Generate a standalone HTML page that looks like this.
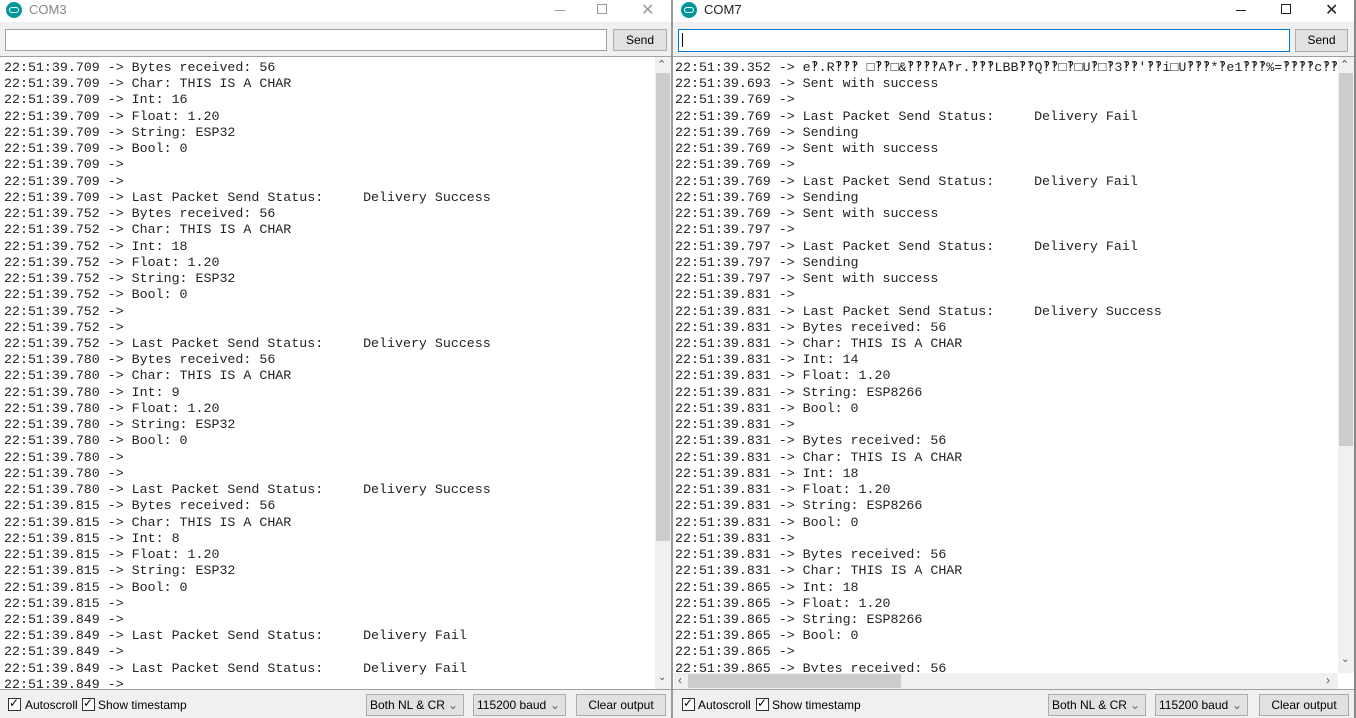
<!DOCTYPE html>
<html><head><meta charset="utf-8"><style>
*{margin:0;padding:0;box-sizing:border-box}
body{width:1356px;height:718px;overflow:hidden;background:#fff;position:relative;font-family:"Liberation Sans",sans-serif}
.a{position:absolute}
.txt{font-family:"Liberation Mono","DejaVu Sans Mono",monospace;font-size:13.3px;line-height:16.24px;white-space:pre;color:#222;overflow:hidden}
.title{font-size:13px;color:#222}
.btn{background:#e1e1e1;border:1px solid #adadad;font-size:12px;text-align:center;color:#000}
.inp{border:1px solid #a0a0a0;background:#fff}
.sb{background:#f0f0f0}
.thumb{background:#cdcdcd}
.sel{border:1px solid #adadad;background:#e1e1e1;font-size:12px;padding-left:3px;line-height:20px}
.cb{width:13px;height:13px;border:1px solid #333;background:#fff}
.lbl{font-size:12px;color:#000}
.logo{width:16px;height:16px;border-radius:50%;background:#00979c}
</style></head><body>
<!-- LEFT WINDOW -->
<div class="a" style="left:0;top:0;width:672px;height:718px;background:#f0f0f0"></div>
<div class="a" style="left:0;top:0;width:672px;height:22px;background:#fff"></div>
<div class="a logo" style="left:6px;top:2px"></div>
<div class="a" style="left:9px;top:7px;width:10px;height:6px;border:1.5px solid #fff;border-radius:3px"></div>
<div class="a title" style="left:29px;top:2px;color:#888">COM3</div>
<div class="a" style="left:555px;top:10px;width:10px;border-top:1px solid #999"></div>
<div class="a" style="left:597px;top:4px;width:10px;height:10px;border:1px solid #999"></div>
<div class="a" style="left:641px;top:0px;font-size:16px;color:#999">✕</div>
<div class="a inp" style="left:5px;top:29px;width:602px;height:22px"></div>
<div class="a btn" style="left:613px;top:29px;width:54px;height:22px;line-height:20px">Send</div>
<div class="a" style="left:0;top:56px;width:672px;height:634px;background:#fff;border-top:1px solid #a0a0a0"></div>
<div class="a txt" style="left:4px;top:60px;width:650px;height:630px">22:51:39.709 -> Bytes received: 56
22:51:39.709 -> Char: THIS IS A CHAR
22:51:39.709 -> Int: 16
22:51:39.709 -> Float: 1.20
22:51:39.709 -> String: ESP32
22:51:39.709 -> Bool: 0
22:51:39.709 -> 
22:51:39.709 -> 
22:51:39.709 -> Last Packet Send Status:     Delivery Success
22:51:39.752 -> Bytes received: 56
22:51:39.752 -> Char: THIS IS A CHAR
22:51:39.752 -> Int: 18
22:51:39.752 -> Float: 1.20
22:51:39.752 -> String: ESP32
22:51:39.752 -> Bool: 0
22:51:39.752 -> 
22:51:39.752 -> 
22:51:39.752 -> Last Packet Send Status:     Delivery Success
22:51:39.780 -> Bytes received: 56
22:51:39.780 -> Char: THIS IS A CHAR
22:51:39.780 -> Int: 9
22:51:39.780 -> Float: 1.20
22:51:39.780 -> String: ESP32
22:51:39.780 -> Bool: 0
22:51:39.780 -> 
22:51:39.780 -> 
22:51:39.780 -> Last Packet Send Status:     Delivery Success
22:51:39.815 -> Bytes received: 56
22:51:39.815 -> Char: THIS IS A CHAR
22:51:39.815 -> Int: 8
22:51:39.815 -> Float: 1.20
22:51:39.815 -> String: ESP32
22:51:39.815 -> Bool: 0
22:51:39.815 -> 
22:51:39.849 -> 
22:51:39.849 -> Last Packet Send Status:     Delivery Fail
22:51:39.849 -> 
22:51:39.849 -> Last Packet Send Status:     Delivery Fail
22:51:39.849 -> </div>
<div class="a sb" style="left:655px;top:57px;width:16px;height:633px"></div>
<div class="a thumb" style="left:656px;top:73px;width:14px;height:468px"></div>
<div class="a" style="left:657px;top:58px;font-size:11px;color:#555">&#8963;</div>
<div class="a" style="left:658px;top:672px;font-size:10px;color:#555">&#8964;</div>
<div class="a" style="left:0;top:689px;width:672px;border-top:1px solid #a0a0a0"></div>
<div class="a cb" style="left:8px;top:698px"></div><div class="a" style="left:9px;top:696px;font-size:12px">✓</div>
<div class="a lbl" style="left:25px;top:698px">Autoscroll</div>
<div class="a cb" style="left:82px;top:698px"></div><div class="a" style="left:83px;top:696px;font-size:12px">✓</div>
<div class="a lbl" style="left:98px;top:698px">Show timestamp</div>
<div class="a sel" style="left:366px;top:694px;width:98px;height:22px">Both NL &amp; CR <span style="position:absolute;right:5px;color:#666">⌄</span></div>
<div class="a sel" style="left:473px;top:694px;width:93px;height:22px">115200 baud <span style="position:absolute;right:5px;color:#666">⌄</span></div>
<div class="a btn" style="left:576px;top:694px;width:90px;height:22px;line-height:20px">Clear output</div>
<div class="a" style="left:671px;top:0;width:2px;height:718px;background:#9a9a9a"></div>

<!-- RIGHT WINDOW -->
<div class="a" style="left:673px;top:0;width:683px;height:718px;background:#f0f0f0"></div>
<div class="a" style="left:673px;top:0;width:683px;height:22px;background:#fff"></div>
<div class="a logo" style="left:681px;top:2px"></div>
<div class="a" style="left:684px;top:7px;width:10px;height:6px;border:1.5px solid #fff;border-radius:3px"></div>
<div class="a title" style="left:704px;top:2px">COM7</div>
<div class="a" style="left:1236px;top:10px;width:10px;border-top:1px solid #222"></div>
<div class="a" style="left:1281px;top:4px;width:10px;height:10px;border:1px solid #222"></div>
<div class="a" style="left:1325px;top:0px;font-size:16px;color:#222">✕</div>
<div class="a inp" style="left:678px;top:29px;width:612px;height:23px;border-color:#0078d7"></div>
<div class="a" style="left:682px;top:33px;width:1px;height:14px;background:#000"></div>
<div class="a btn" style="left:1295px;top:29px;width:53px;height:23px;line-height:21px">Send</div>
<div class="a" style="left:673px;top:56px;width:681px;height:634px;background:#fff;border-top:1px solid #a0a0a0"></div>
<div class="a txt" style="left:675px;top:60px;width:662px;height:612px">22:51:39.352 -> e‽.R‽‽‽ □‽‽□&amp;‽‽‽‽A‽r.‽‽‽LBB‽‽Q‽‽□‽□U‽□‽3‽‽'‽‽i□U‽‽‽*‽e1‽‽‽%=‽‽‽‽c‽‽N□i‽‽‽*‽]‽'
22:51:39.693 -> Sent with success
22:51:39.769 -> 
22:51:39.769 -> Last Packet Send Status:     Delivery Fail
22:51:39.769 -> Sending
22:51:39.769 -> Sent with success
22:51:39.769 -> 
22:51:39.769 -> Last Packet Send Status:     Delivery Fail
22:51:39.769 -> Sending
22:51:39.769 -> Sent with success
22:51:39.797 -> 
22:51:39.797 -> Last Packet Send Status:     Delivery Fail
22:51:39.797 -> Sending
22:51:39.797 -> Sent with success
22:51:39.831 -> 
22:51:39.831 -> Last Packet Send Status:     Delivery Success
22:51:39.831 -> Bytes received: 56
22:51:39.831 -> Char: THIS IS A CHAR
22:51:39.831 -> Int: 14
22:51:39.831 -> Float: 1.20
22:51:39.831 -> String: ESP8266
22:51:39.831 -> Bool: 0
22:51:39.831 -> 
22:51:39.831 -> Bytes received: 56
22:51:39.831 -> Char: THIS IS A CHAR
22:51:39.831 -> Int: 18
22:51:39.831 -> Float: 1.20
22:51:39.831 -> String: ESP8266
22:51:39.831 -> Bool: 0
22:51:39.831 -> 
22:51:39.831 -> Bytes received: 56
22:51:39.831 -> Char: THIS IS A CHAR
22:51:39.865 -> Int: 18
22:51:39.865 -> Float: 1.20
22:51:39.865 -> String: ESP8266
22:51:39.865 -> Bool: 0
22:51:39.865 -> 
22:51:39.865 -> Bytes received: 56</div>
<div class="a sb" style="left:1338px;top:57px;width:16px;height:616px"></div>
<div class="a thumb" style="left:1339px;top:73px;width:14px;height:373px"></div>
<div class="a" style="left:1340px;top:58px;font-size:11px;color:#555">&#8963;</div>
<div class="a" style="left:1341px;top:654px;font-size:10px;color:#555">&#8964;</div>
<div class="a sb" style="left:674px;top:673px;width:664px;height:16px"></div>
<div class="a thumb" style="left:688px;top:674px;width:213px;height:14px"></div>
<div class="a" style="left:678px;top:673px;font-size:12px;color:#555">‹</div>
<div class="a" style="left:1326px;top:673px;font-size:12px;color:#555">›</div>
<div class="a" style="left:673px;top:689px;width:681px;border-top:1px solid #a0a0a0"></div>
<div class="a cb" style="left:682px;top:698px"></div><div class="a" style="left:683px;top:696px;font-size:12px">✓</div>
<div class="a lbl" style="left:698px;top:698px">Autoscroll</div>
<div class="a cb" style="left:756px;top:698px"></div><div class="a" style="left:757px;top:696px;font-size:12px">✓</div>
<div class="a lbl" style="left:772px;top:698px">Show timestamp</div>
<div class="a sel" style="left:1048px;top:694px;width:98px;height:22px">Both NL &amp; CR <span style="position:absolute;right:5px;color:#666">⌄</span></div>
<div class="a sel" style="left:1155px;top:694px;width:93px;height:22px">115200 baud <span style="position:absolute;right:5px;color:#666">⌄</span></div>
<div class="a btn" style="left:1259px;top:694px;width:90px;height:22px;line-height:20px">Clear output</div>
<div class="a" style="left:1354px;top:0;width:2px;height:718px;background:#888"></div>
</body></html>
